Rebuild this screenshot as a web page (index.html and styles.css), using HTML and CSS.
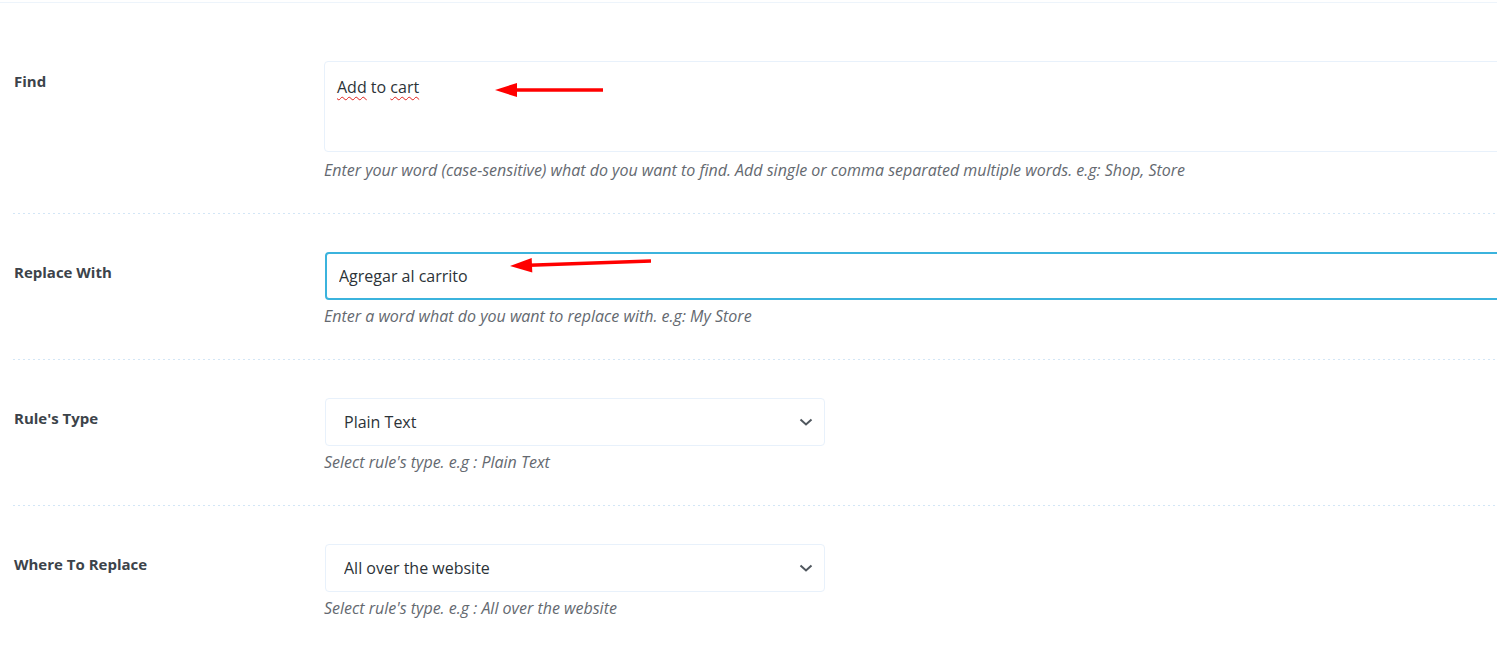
FILE: index.html
```html
<!DOCTYPE html>
<html lang="en">
<head>
  <meta charset="UTF-8">
  <meta name="viewport" content="width=device-width, initial-scale=1.0">
  <title>Find and Replace Rule</title>
  <link rel="stylesheet" href="styles.css">
</head>
<body>
  <div class="top-line"></div>

  <div class="form-table">
    <div class="form-row">
      <div class="form-label">Find</div>
      <div class="form-field">
        <div class="textarea" role="textbox" aria-multiline="true"><span class="typo">Add</span> to <span class="typo">cart</span></div>
        <p class="description">Enter your word (case-sensitive) what do you want to find. Add single or comma separated multiple words. e.g: Shop, Store</p>
        <svg class="arrow arrow-find" width="120" height="20" viewBox="0 0 120 20">
          <line x1="22" y1="10" x2="111" y2="10" stroke="#ff0000" stroke-width="3.5"/>
          <polygon points="3,10 25,3 25,17" fill="#ff0000"/>
        </svg>
      </div>
    </div>

    <div class="form-row">
      <div class="form-label">Replace With</div>
      <div class="form-field">
        <input type="text" class="text-input focused" value="Agregar al carrito">
        <p class="description">Enter a word what do you want to replace with. e.g: My Store</p>
        <svg class="arrow arrow-replace" width="160" height="24" viewBox="0 0 160 24">
          <line x1="25" y1="13.3" x2="147" y2="9" stroke="#ff0000" stroke-width="3.5"/>
          <polygon points="6,14 28.3,20.5 27.7,6" fill="#ff0000"/>
        </svg>
      </div>
    </div>

    <div class="form-row">
      <div class="form-label">Rule's Type</div>
      <div class="form-field">
        <div class="select-wrap">
          <select class="select">
            <option>Plain Text</option>
            <option>Regular Expression</option>
          </select>
          <svg class="chevron" width="14" height="8" viewBox="0 0 14 8">
            <polyline points="1.5,1.5 7,6.5 12.5,1.5" fill="none" stroke="#50575e" stroke-width="2"/>
          </svg>
        </div>
        <p class="description">Select rule's type. e.g : Plain Text</p>
      </div>
    </div>

    <div class="form-row">
      <div class="form-label">Where To Replace</div>
      <div class="form-field">
        <div class="select-wrap">
          <select class="select">
            <option>All over the website</option>
            <option>Only in posts</option>
          </select>
          <svg class="chevron" width="14" height="8" viewBox="0 0 14 8">
            <polyline points="1.5,1.5 7,6.5 12.5,1.5" fill="none" stroke="#50575e" stroke-width="2"/>
          </svg>
        </div>
        <p class="description">Select rule's type. e.g : All over the website</p>
      </div>
    </div>
  </div>
</body>
</html>
```

FILE: styles.css
```css
body {
  font-family: "Open Sans", "Noto Sans", sans-serif;
  background: #ffffff;
  color: #2c3338;
  margin: 0;
  padding: 0;
  overflow: hidden;
}

.top-line {
  margin-top: 2px;
  height: 1px;
  background-color: #edf4fb;
}

.form-table {
  padding-top: 19px;
  padding-left: 13px;
}

.form-row {
  display: grid;
  grid-template-columns: 311px 1fr;
  padding-top: 39px;
  padding-bottom: 33px;
}

.form-row + .form-row {
  background-image: linear-gradient(to right, #d3e6f6 2px, transparent 2px);
  background-size: 5px 1px;
  background-repeat: repeat-x;
  background-position: 0 0;
}

.form-label {
  font-size: 15px;
  font-weight: 700;
  line-height: 20px;
  padding-top: 10px;
  color: #3c434a;
  padding-left: 1px;
}

.form-field {
  position: relative;
}

.textarea {
  width: 1250px;
  height: 91px;
  box-sizing: border-box;
  border: 1px solid #e8f1fb;
  border-radius: 4px;
  padding: 14px 12px;
  font-size: 16px;
  line-height: 22px;
  color: #2c3338;
}

.typo {
  text-decoration: underline wavy #e0201b;
  text-decoration-thickness: 1px;
  text-underline-offset: 3px;
}

.text-input {
  display: block;
  width: 1250px;
  height: 48px;
  box-sizing: border-box;
  margin-left: 1px;
  padding: 0 12px;
  border: 2px solid #3bb3dd;
  border-radius: 4px;
  font-family: inherit;
  font-size: 16px;
  color: #2c3338;
  outline: none;
}

.select-wrap {
  position: relative;
  width: 500px;
  margin-left: 1px;
}

.select {
  display: block;
  width: 500px;
  height: 48px;
  box-sizing: border-box;
  padding: 0 18px;
  border: 1px solid #e8f1fb;
  border-radius: 4px;
  background: #ffffff;
  font-family: inherit;
  font-size: 16px;
  color: #2c3338;
  appearance: none;
  -webkit-appearance: none;
  outline: none;
}

.chevron {
  position: absolute;
  right: 12px;
  top: 20px;
  pointer-events: none;
}

.description {
  margin: 6px 0 0;
  font-size: 16px;
  line-height: 20px;
  font-style: italic;
  color: #646970;
}

.textarea + .description {
  margin-top: 8px;
}

.arrow {
  position: absolute;
  pointer-events: none;
}

.arrow-find {
  left: 168px;
  top: 19px;
}

.arrow-replace {
  left: 180px;
  top: 0;
}
```
